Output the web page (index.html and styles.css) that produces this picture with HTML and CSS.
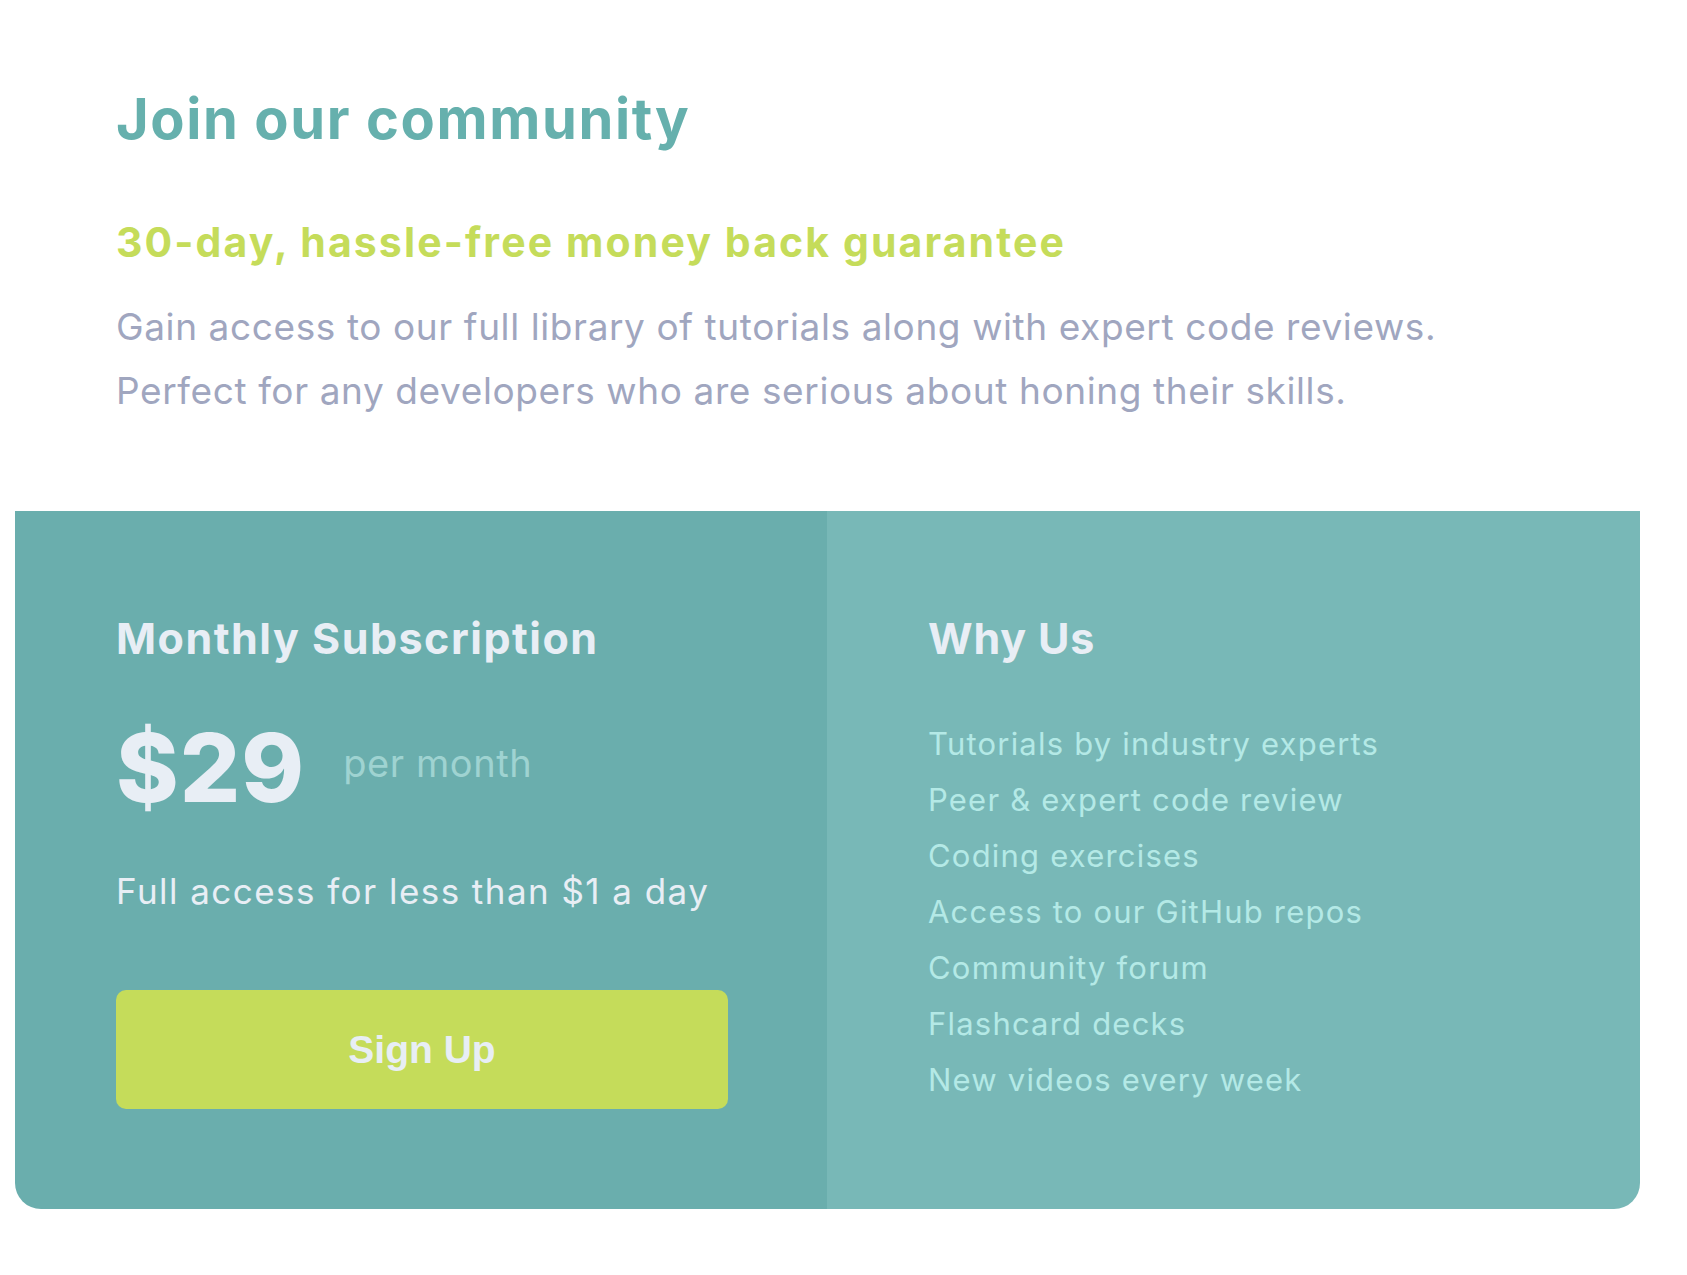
FILE: index.html
```html
<!DOCTYPE html>
<html lang="en">
<head>
<meta charset="utf-8">
<title>Join our community</title>
<link rel="stylesheet" href="styles.css">
</head>
<body>
<main class="card">
  <section class="intro">
    <h1 class="intro-title">Join our community</h1>
    <h2 class="intro-sub">30-day, hassle-free money back guarantee</h2>
    <p class="intro-text">Gain access to our full library of tutorials along with expert code reviews.<br>Perfect for any developers who are serious about honing their skills.</p>
  </section>
  <div class="panels">
    <section class="panel panel-sub">
      <h3 class="panel-title">Monthly Subscription</h3>
      <div class="price-row">
        <span class="price">$29</span>
        <span class="per">per month</span>
      </div>
      <p class="access">Full access for less than $1 a day</p>
      <button class="signup" type="button">Sign Up</button>
    </section>
    <section class="panel panel-why">
      <h3 class="panel-title">Why Us</h3>
      <ul class="why-list">
        <li>Tutorials by industry experts</li>
        <li>Peer &amp; expert code review</li>
        <li>Coding exercises</li>
        <li>Access to our GitHub repos</li>
        <li>Community forum</li>
        <li>Flashcard decks</li>
        <li>New videos every week</li>
      </ul>
    </section>
  </div>
</main>
</body>
</html>
```

FILE: styles.css
```css
* { box-sizing: border-box; }

body {
  margin: 0;
  background: #ffffff;
  font-family: Inter, "Open Sans", sans-serif;
}

.card {
  width: 1625px;
  margin: 0 0 0 15px;
  border-radius: 0 0 26px 26px;
  overflow: hidden;
  background: #ffffff;
}

.intro {
  padding: 85px 101px 88px;
}

.intro-title {
  margin: 0;
  font-size: 56px;
  line-height: 68px;
  font-weight: 700;
  letter-spacing: 1.6px;
  color: #66b0ad;
}

.intro-sub {
  margin: 64px 0 0;
  font-size: 41px;
  line-height: 50px;
  font-weight: 700;
  letter-spacing: 2.1px;
  color: #c5dc5a;
}

.intro-text {
  margin: 28px 0 0;
  font-size: 37px;
  line-height: 64px;
  font-weight: 400;
  letter-spacing: 0.6px;
  color: #a0a6bf;
}

.panels {
  display: grid;
  grid-template-columns: 812px 1fr;
}

.panel {
  padding: 101px 101px 100px;
  display: flex;
  flex-direction: column;
  align-items: flex-start;
}

.panel-sub { background: #6aaead; }
.panel-why { background: #78b8b7; }

.panel-title {
  margin: 0;
  font-size: 43px;
  line-height: 52px;
  font-weight: 700;
  letter-spacing: 1.5px;
  color: #e8eef5;
}

.panel-why .panel-title {
  letter-spacing: 0.8px;
}

.price-row {
  margin-top: 56px;
  display: flex;
  align-items: center;
  gap: 38px;
}

.price {
  font-size: 95px;
  line-height: 95px;
  font-weight: 800;
  letter-spacing: 1px;
  color: #e8eef5;
}

.per {
  font-size: 38px;
  line-height: 46px;
  padding-bottom: 10px;
  letter-spacing: 0.6px;
  color: #9fd3d1;
}

.access {
  margin: 55px 0 0;
  font-size: 35px;
  line-height: 42px;
  letter-spacing: 1.45px;
  color: #e8eef5;
}

.signup {
  margin-top: 78px;
  width: 612px;
  height: 119px;
  border: 0;
  border-radius: 10px;
  background: #c5dc5a;
  color: #e8eef5;
  font-family: "Liberation Sans", Arial, sans-serif;
  font-size: 39px;
  font-weight: 700;
  cursor: pointer;
}

.why-list {
  margin: 52px 0 0;
  padding: 0;
  list-style: none;
  font-size: 31px;
  line-height: 56px;
  letter-spacing: 1.2px;
  color: #b4e9e6;
}
```
